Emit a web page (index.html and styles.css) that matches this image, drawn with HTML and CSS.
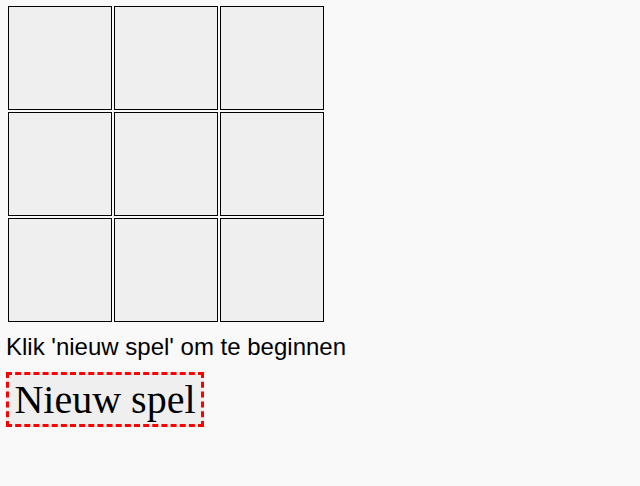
FILE: index.html
```html
<!DOCTYPE html>
<html>
<head>
<meta charset="utf-8">
<link rel="stylesheet" href="styles.css">
</head>
<body>
<div class="board">
  <div class="cell"></div><div class="cell"></div><div class="cell"></div>
  <div class="cell"></div><div class="cell"></div><div class="cell"></div>
  <div class="cell"></div><div class="cell"></div><div class="cell"></div>
</div>
<p class="status">Klik 'nieuw spel' om te beginnen</p>
<button class="new-game">Nieuw spel</button>
</body>
</html>
```
FILE: styles.css
```css
html, body {
  background: #f9f9f9;
}
body {
  margin: 6px;
  font-family: "Liberation Sans", Arial, sans-serif;
}
.board {
  display: grid;
  grid-template-columns: repeat(3, 104px);
  grid-auto-rows: 104px;
  gap: 2px;
  margin-left: 2px;
  width: max-content;
}
.cell {
  box-sizing: border-box;
  border: 1px solid #000;
  background: #efefef;
}
.status {
  font-size: 24px;
  line-height: 28px;
  margin: 11px 0 11px 0;
  color: #000;
}
.new-game {
  display: block;
  box-sizing: border-box;
  height: 55px;
  width: 198px;
  padding: 0 5px;
  margin: 0;
  font-family: "Liberation Serif", "Times New Roman", serif;
  font-size: 40px;
  color: #000;
  background: #efefef;
  border: 3px dashed #ff0000;
  border-radius: 0;
}
```
